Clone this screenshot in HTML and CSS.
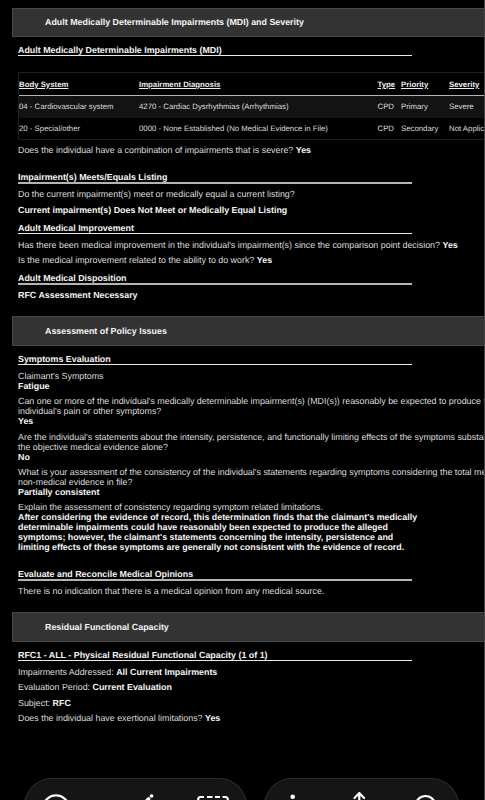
FILE: index.html
```html
<!DOCTYPE html>
<html lang="en">
<head>
<meta charset="utf-8">
<meta name="viewport" content="width=device-width, initial-scale=1">
<title>Disability Determination</title>
<link rel="stylesheet" href="styles.css">
</head>
<body>
<main class="document">
  <h1 class="bar">Adult Medically Determinable Impairments (MDI) and Severity</h1>
  <section class="section">
    <h2 class="heading">Adult Medically Determinable Impairments (MDI)</h2>
    <div class="table">
      <div class="row head"><span>Body System</span><span>Impairment Diagnosis</span><span>Type</span><span>Priority</span><span>Severity</span></div>
      <div class="row shaded"><span>04 - Cardiovascular system</span><span>4270 - Cardiac Dysrhythmias (Arrhythmias)</span><span>CPD</span><span>Primary</span><span>Severe</span></div>
      <div class="row"><span>20 - Special/other</span><span>0000 - None Established (No Medical Evidence in File)</span><span>CPD</span><span>Secondary</span><span>Not Applicable</span></div>
    </div>
    <p class="after-table">Does the individual have a combination of impairments that is severe? <b>Yes</b></p>
    <h2 class="heading spaced soft">Impairment(s) Meets/Equals Listing</h2>
    <p>Do the current impairment(s) meet or medically equal a current listing?</p>
    <p><b>Current impairment(s) Does Not Meet or Medically Equal Listing</b></p>
    <h2 class="heading near">Adult Medical Improvement</h2>
    <p>Has there been medical improvement in the individual's impairment(s) since the comparison point decision? <b>Yes</b></p>
    <p class="tight">Is the medical improvement related to the ability to do work? <b>Yes</b></p>
    <h2 class="heading near soft">Adult Medical Disposition</h2>
    <p><b>RFC Assessment Necessary</b></p>
  </section>

  <h1 class="bar tall">Assessment of Policy Issues</h1>
  <section class="section policy">
    <h2 class="heading">Symptoms Evaluation</h2>
    <p>Claimant's Symptoms<br><b>Fatigue</b></p>
    <p class="tight">Can one or more of the individual's medically determinable impairment(s) (MDI(s)) reasonably be expected to produce the<br>individual's pain or other symptoms?<br><b>Yes</b></p>
    <p>Are the individual's statements about the intensity, persistence, and functionally limiting effects of the symptoms substantiated by<br>the objective medical evidence alone?<br><b>No</b></p>
    <p class="tight">What is your assessment of the consistency of the individual's statements regarding symptoms considering the total medical and<br>non-medical evidence in file?<br><b>Partially consistent</b></p>
    <p class="tight">Explain the assessment of consistency regarding symptom related limitations.<br><b>After considering the evidence of record, this determination finds that the claimant's medically<br>determinable impairments could have reasonably been expected to produce the alleged<br>symptoms; however, the claimant's statements concerning the intensity, persistence and<br>limiting effects of these symptoms are generally not consistent with the evidence of record.</b></p>
    <h2 class="heading spaced last soft">Evaluate and Reconcile Medical Opinions</h2>
    <p>There is no indication that there is a medical opinion from any medical source.</p>
  </section>

  <h1 class="bar tall">Residual Functional Capacity</h1>
  <section class="section capacity">
    <h2 class="heading">RFC1 - ALL - Physical Residual Functional Capacity (1 of 1)</h2>
    <p>Impairments Addressed: <b>All Current Impairments</b></p>
    <p>Evaluation Period: <b>Current Evaluation</b></p>
    <p>Subject: <b>RFC</b></p>
    <p>Does the individual have exertional limitations? <b>Yes</b></p>
  </section>
</main>
<nav class="dock">
  <div class="pill">
    <svg width="223" height="60" viewBox="24 778 223 60"><circle cx="56" cy="808" r="12.700"/><path d="M151.500 796h.1" stroke-width="3.600"/><path d="M148.600 799L138 809.600" stroke-width="3.600"/><path stroke-linecap="butt" d="M198.200 803v-3.500q0-2.500 2.500-2.500h3.300M207 797h5.500M215 797h5M222.500 797h2.800q2.500 0 2.500 2.500v3.500"/></svg>
  </div>
  <div class="pill">
    <svg width="195" height="60" viewBox="264 778 195 60"><circle cx="292.700" cy="796.800" r="2.300" class="dot"/><path d="M292.700 803v14M359.300 793v24M354.500 798l4.800-5 4.800 5"/><circle cx="425.500" cy="806" r="10"/></svg>
  </div>
</nav>
</body>
</html>
```
FILE: styles.css
```css
* { box-sizing: border-box; }
body {
  position: relative;
  margin: 0;
  height: 800px;
  overflow: hidden;
  background: #000;
  color: #dcdcdc;
  font: 8.89px/10px "Liberation Sans", Arial, sans-serif;
  text-rendering: geometricPrecision;
  white-space: nowrap;
}
.document { height: 800px; padding: 8px 0 0 12px; border-right: 1px solid #444; overflow: hidden; }
h1, h2, p { margin: 0; font-size: inherit; }
b { color: #f4f4f4; }
.bar {
  height: 29px;
  padding: 8px 0 0 32px;
  background: #333;
  border: 1px solid #484848;
  border-right: 0;
  color: #f4f4f4;
}
.bar.tall { height: 30px; padding-top: 9px; }
.section { height: 279px; padding: 8px 0 0 6px; }
.section.policy { height: 266px; }
.heading { width: 394px; height: 11px; border-bottom: 1px solid #e8e8e8; color: #f4f4f4; margin-bottom: 6px; }
.heading.soft { height: 12px; border-bottom: 2px solid #b4b4b4; margin-bottom: 5px; }
.spaced { margin-top: 16px; }
.spaced.last { margin-top: 17px; }
.near { margin-top: 8px; }
p + p { margin-top: 6px; }
p + p.tight { margin-top: 5px; }
.table { width: 520px; height: 68px; margin-top: 16px; border: 1px solid #202020; font-size: 7.8px; }
.row { display: grid; grid-template-columns: 120px 238.5px 23.5px 48px 80px; height: 22px; line-height: 22px; }
.head { height: 23px; line-height: 24px; border-bottom: 1px solid #b4b4b4; color: #eee; font-weight: bold; text-decoration: underline; }
.shaded { background: #131313; }
.after-table { margin-top: 5px; }
.section p.after-table + .spaced { margin-top: 17px; }
.capacity p + p { margin-top: 5.4px; }
.dock { position: absolute; top: 778px; left: 24px; display: flex; gap: 17px; }
.pill { height: 60px; border-radius: 28px; background: #151515; box-shadow: inset 0 0 0 1px #2c2c2c; }
.pill svg { display: block; fill: none; stroke: #fff; stroke-width: 2.2; stroke-linecap: round; stroke-linejoin: round; }
.pill .dot { fill: #fff; stroke: none; }
```
